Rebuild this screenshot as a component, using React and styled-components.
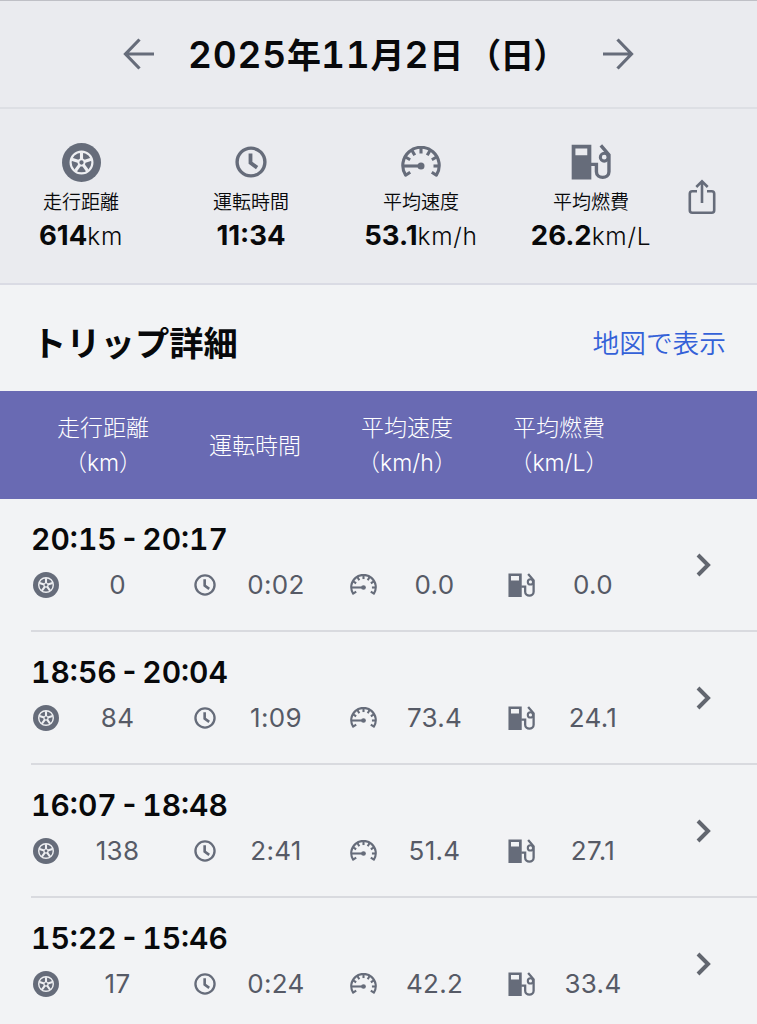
import React from 'react';

import styled, { createGlobalStyle } from 'styled-components';

const GlobalStyle = createGlobalStyle`
    * {
        box-sizing: border-box;
    }
    body {
        margin: 0;
        background: #f2f3f5;
        color: #08090b;
        font-family: Inter, "Noto Sans CJK JP", sans-serif;
    }
`;

const Page = styled.div`
    width: 757px;
    height: 1024px;
    overflow: hidden;
`;

const DateBar = styled.header`
    display: flex;
    align-items: center;
    justify-content: center;
    height: 109px;
    padding-bottom: 1px;
    background: #eaebef;
    border-top: 1px solid #bfc0c6;
    border-bottom: 2px solid #dddfe4;
`;

const DateText = styled.h1`
    width: 376px;
    margin: 0 38px 0 33px;
    font-size: 34px;
    font-weight: 600;
    line-height: 50px;
    white-space: nowrap;
    font-family: "Noto Sans CJK JP", sans-serif;
`;

const Digits = styled.span`
    font-family: Inter, sans-serif;
    font-size: 37px;
    letter-spacing: 0.8px;
    line-height: 1;
    font-variant-numeric: tabular-nums;
`;

const Weekday = styled.span`
    margin-left: 4px;
    letter-spacing: -1px;
`;

const Summary = styled.section`
    display: grid;
    grid-template-columns: repeat(4, 170px) 1fr;
    height: 176px;
    padding-top: 29px;
    background: #eaebef;
    border-bottom: 2px solid #dadbe4;
`;

const SummaryItem = styled.div`
    display: flex;
    flex-direction: column;
    align-items: center;
    margin-left: -8px;
`;

const SummaryIcon = styled.div`
    display: flex;
    align-items: center;
    justify-content: center;
    height: 48px;
`;

const SummaryLabel = styled.div`
    height: 31px;
    font-size: 19px;
    line-height: 34px;
    font-weight: 350;
`;

const SummaryValue = styled.div`
    display: flex;
    align-items: baseline;
    height: 36px;
    line-height: 36px;
    font-size: 27.5px;
    font-weight: 700;
`;

const Unit = styled.span`
    font-size: 24.5px;
    font-weight: 300;
    letter-spacing: 0.7px;
`;

const Share = styled.div`
    padding: 41px 0 0 8px;
`;

const SectionHead = styled.div`
    display: flex;
    align-items: center;
    justify-content: space-between;
    height: 106px;
    padding: 11px 31px 0 32px;
`;

const SectionTitle = styled.h2`
    margin: 0;
    font-size: 34.3px;
    font-weight: 700;
    line-height: 50px;
`;

const MapLink = styled.a`
    margin-top: -2px;
    color: #3461d8;
    font-size: 26.7px;
    font-weight: 350;
    line-height: 40px;
`;

const Columns = styled.div`
    display: grid;
    grid-template-columns: repeat(4, 152px);
    align-items: center;
    height: 108px;
    padding: 2px 0 0 27px;
    background: #696ab3;
    color: #fff;
    font-size: 23px;
    font-weight: 300;
    line-height: 35px;
    text-align: center;
`;

const Trip = styled.div`
    display: flex;
    align-items: center;
    height: 133px;
    margin-left: 31px;
    border-bottom: 2px solid #d9dadf;
`;

const TripBody = styled.div`
    width: 665px;
    height: 100%;
    padding-top: 19px;
`;

const TripTime = styled.div`
    height: 43px;
    font-size: 30px;
    font-weight: 600;
    line-height: 42px;
    white-space: pre;
    word-spacing: -5px;
    font-variant-numeric: tabular-nums;
`;

const TripStats = styled.div`
    display: grid;
    grid-template-columns: repeat(4, 158.5px);
    height: 48px;
`;

const Stat = styled.div`
    display: flex;
    align-items: center;
`;

const StatIcon = styled.div`
    display: flex;
    align-items: center;
    justify-content: center;
    width: 30px;
`;

const StatValue = styled.div`
    width: 113px;
    color: #565a66;
    font-size: 26px;
    letter-spacing: 0.3px;
    line-height: 48px;
    text-align: center;
`;

const WheelIcon = ({ size }) => (
    <svg width={size} height={size} viewBox="0 0 40 40">
        <circle cx="20" cy="20" r="20" fill="#666c7a" />
        <circle cx="20" cy="20" r="11.2" fill="none" stroke="#eeeff2" strokeWidth="2.2" />
        {[0, 72, 144, 216, 288].map((angle) => (
            <path
                key={angle}
                d="M20 17V9.5"
                stroke="#eeeff2"
                strokeWidth="3.2"
                transform={`rotate(${angle} 20 20)`}
            />
        ))}
        <circle cx="20" cy="20" r="3.1" fill="#666c7a" stroke="#eeeff2" strokeWidth="1.8" />
    </svg>
);

const ClockIcon = ({ size }) => (
    <svg width={size} height={size} viewBox="0 0 32 32" fill="none" stroke="#666c7a">
        <circle cx="16" cy="16" r="13.9" strokeWidth="3.4" />
        <path d="M15.5 7.5v9.3l6.6 4.8" strokeWidth="3.8" />
    </svg>
);

const GaugeIcon = ({ size }) => (
    <svg width={size} height={size * 0.8} viewBox="0 0 40 32" fill="none" stroke="#666c7a" strokeWidth="3.1">
        <path d="M9.2 26.2L4.6 29.2A18.2 18.2 0 1 1 35.4 29.2L30.8 26.2" strokeLinejoin="round" />
        {[-60, -30, 0, 30, 60, 90].map((angle) => (
            <path key={angle} d="M20 2v5.5" transform={`rotate(${angle} 20 20)`} />
        ))}
        <path d="M2 20h16" />
        <circle cx="20" cy="20" r="3.5" fill="#666c7a" stroke="none" />
    </svg>
);

const PumpIcon = ({ size }) => (
    <svg width={size} height={size * 0.89} viewBox="20 18 118 105" fill="none" stroke="#666c7a" strokeWidth="10">
        <path d="M22 20h58v103H22zM33 31v20h35V31z" fill="#666c7a" fillRule="evenodd" stroke="none" />
        <path d="M78 78h17v22c0 22 37 22 37 0V50L108 22" />
        <circle cx="118" cy="57" r="11.5" strokeWidth="9" />
    </svg>
);

const ShareIcon = () => (
    <svg width="28" height="36" viewBox="0 0 28 36" fill="none" stroke="#666c7a" strokeWidth="2.6">
        <path d="M9 12.3H4.3a2.5 2.5 0 0 0-2.5 2.5v16.4a2.5 2.5 0 0 0 2.5 2.5h19.4a2.5 2.5 0 0 0 2.5-2.5V14.8a2.5 2.5 0 0 0-2.5-2.5H19" />
        <path d="M14 24V3M8.3 8L14 2.3 19.7 8" />
    </svg>
);

const ArrowIcon = ({ flip }) => (
    <svg
        width="32"
        height="32"
        viewBox="0 0 32 32"
        fill="none"
        stroke="#666c7a"
        strokeWidth="3.2"
        transform={flip ? 'scale(-1 1)' : undefined}
    >
        <path d="M31 16H2.5M16.5 1.5L2.5 16l14 14.5" />
    </svg>
);

const ChevronIcon = () => (
    <svg width="16" height="24" viewBox="0 0 16 24" fill="none" stroke="#62666f" strokeWidth="4">
        <path d="M2 2l10 10L2 22" />
    </svg>
);

const summary = [
    { label: '走行距離', value: '614', unit: 'km', icon: <WheelIcon size={39} /> },
    { label: '運転時間', value: '11:34', unit: '', icon: <ClockIcon size={32} /> },
    { label: '平均速度', value: '53.1', unit: 'km/h', icon: <GaugeIcon size={40} /> },
    { label: '平均燃費', value: '26.2', unit: 'km/L', icon: <PumpIcon size={40} /> },
];

const trips = [
    { time: '20:15 - 20:17', stats: ['0', '0:02', '0.0', '0.0'] },
    { time: '18:56 - 20:04', stats: ['84', '1:09', '73.4', '24.1'] },
    { time: '16:07 - 18:48', stats: ['138', '2:41', '51.4', '27.1'] },
    { time: '15:22 - 15:46', stats: ['17', '0:24', '42.2', '33.4'] },
];

const statIcons = [
    <WheelIcon size={26} />,
    <ClockIcon size={22} />,
    <GaugeIcon size={27} />,
    <PumpIcon size={27} />,
];

const App = () => {
    return (
        <Page>
            <GlobalStyle />
            <DateBar>
                <ArrowIcon />
                <DateText>
                    <Digits>2025</Digits>年<Digits>11</Digits>月<Digits>2</Digits>日<Weekday>（日）</Weekday>
                </DateText>
                <ArrowIcon flip />
            </DateBar>
            <Summary>
                {summary.map((item) => (
                    <SummaryItem key={item.label}>
                        <SummaryIcon>{item.icon}</SummaryIcon>
                        <SummaryLabel>{item.label}</SummaryLabel>
                        <SummaryValue>
                            {item.value}
                            <Unit>{item.unit}</Unit>
                        </SummaryValue>
                    </SummaryItem>
                ))}
                <Share>
                    <ShareIcon />
                </Share>
            </Summary>
            <SectionHead>
                <SectionTitle>トリップ詳細</SectionTitle>
                <MapLink>地図で表示</MapLink>
            </SectionHead>
            <Columns>
                <div>走行距離<br />（km）</div>
                <div>運転時間</div>
                <div>平均速度<br />（km/h）</div>
                <div>平均燃費<br />（km/L）</div>
            </Columns>
            {trips.map((trip) => (
                <Trip key={trip.time}>
                    <TripBody>
                        <TripTime>{trip.time}</TripTime>
                        <TripStats>
                            {trip.stats.map((value, i) => (
                                <Stat key={i}>
                                    <StatIcon>{statIcons[i]}</StatIcon>
                                    <StatValue>{value}</StatValue>
                                </Stat>
                            ))}
                        </TripStats>
                    </TripBody>
                    <ChevronIcon />
                </Trip>
            ))}
        </Page>
    );
};

export default App;
